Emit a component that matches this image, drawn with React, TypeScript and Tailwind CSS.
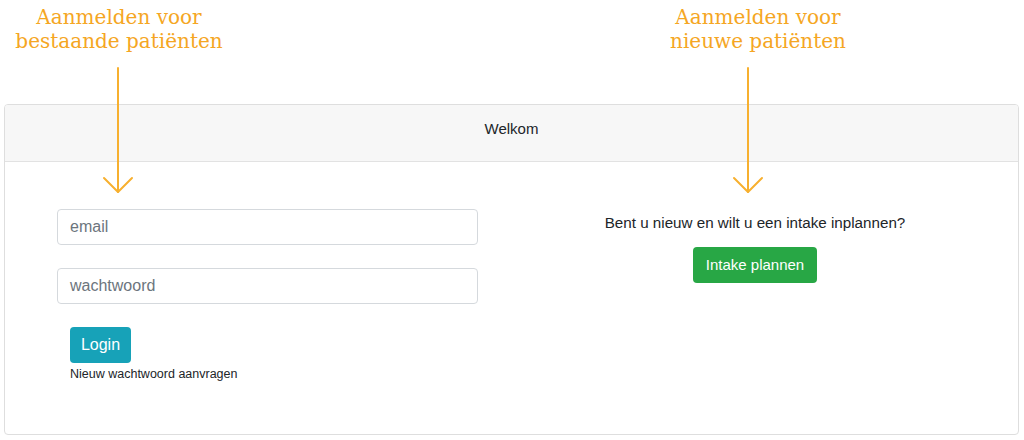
import React from "react";

function Arrow({ left }: { left: number }) {
  return (
    <svg
      className="absolute top-[66px]"
      style={{ left: left - 16 }}
      width="32"
      height="130"
      viewBox="0 0 32 130"
      fill="none"
      stroke="#f7b02f"
      strokeWidth="2"
      strokeLinecap="round"
      strokeLinejoin="round"
    >
      <path d="M16 2 V126" />
      <path d="M2 112 L16 126 L30 112" />
    </svg>
  );
}

export default function App() {
  const serif = { fontFamily: '"DejaVu Serif", "Liberation Serif", serif' };
  return (
    <div
      className="relative w-[1024px] h-[440px] bg-white overflow-hidden"
      style={{ fontFamily: '"Liberation Sans", Arial, sans-serif' }}
    >
      <div className="flex h-[104px] text-[#f5a623] text-[20px] leading-[24px] text-center" style={serif}>
        <div className="w-[238px] pt-[5px]">
          Aanmelden voor
          <br />
          bestaande patiënten
        </div>
        <div className="w-[400px]" />
        <div className="w-[240px] pt-[5px]">
          Aanmelden voor
          <br />
          nieuwe patiënten
        </div>
      </div>

      <div className="ml-[4px] w-[1015px] h-[331px] border border-[#dedede] rounded-[4px] flex flex-col overflow-hidden">
        <div className="h-[57px] pb-[8px] bg-[#f7f7f7] border-b border-[#e2e2e2] flex items-center justify-center text-[15px] text-[#212529]">
          Welkom
        </div>
        <div className="flex flex-1">
          <div className="w-[507px] pl-[52px] pt-[47px] flex flex-col">
            <div className="w-[421px] h-[36px] border border-[#d5d9dd] rounded-[4px] flex items-center px-[12px] text-[16px] text-[#6c757d]">
              email
            </div>
            <div className="mt-[23px] w-[421px] h-[36px] border border-[#d5d9dd] rounded-[4px] flex items-center px-[12px] text-[16px] text-[#6c757d]">
              wachtwoord
            </div>
            <div className="ml-[13px] mt-[23px] w-[61px] h-[36px] rounded-[4px] bg-[#17a2b8] text-white text-[16px] flex items-center justify-center">
              Login
            </div>
            <div className="ml-[13px] mt-[2px] text-[12.5px] text-[#212529]">Nieuw wachtwoord aanvragen</div>
          </div>
          <div className="flex-1 pr-[20px] pt-[51px] flex flex-col items-center">
            <div className="text-[15.2px] text-[#212529] leading-[20px]">Bent u nieuw en wilt u een intake inplannen?</div>
            <div className="mt-[14px] w-[124px] h-[36px] rounded-[4px] bg-[#28a745] text-white text-[15px] flex items-center justify-center">
              Intake plannen
            </div>
          </div>
        </div>
      </div>

      <Arrow left={118} />
      <Arrow left={748} />
    </div>
  );
}
